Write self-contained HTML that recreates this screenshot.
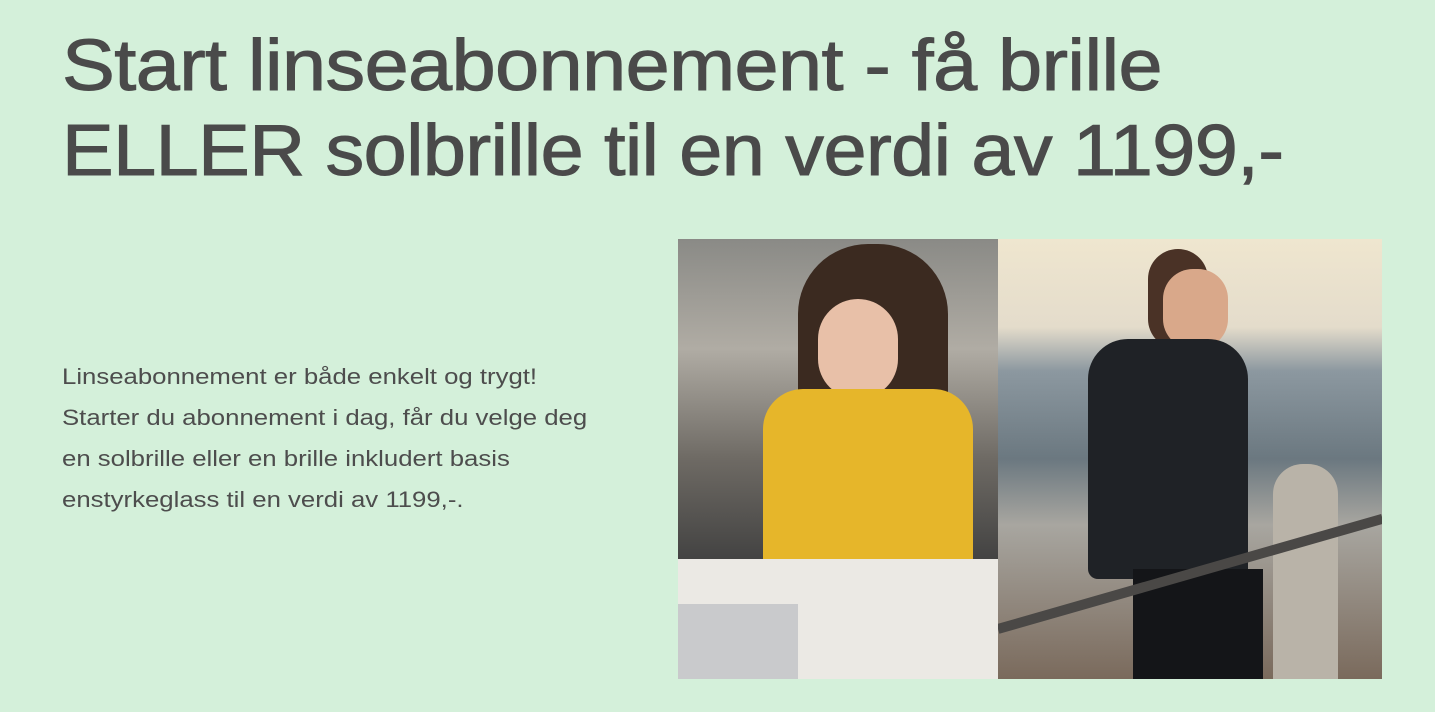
<!DOCTYPE html>
<html><head><meta charset="utf-8"><style>
body{margin:0;width:1435px;height:712px;background:#d4f0da;font-family:"Liberation Sans",sans-serif;color:#4a4a4a;overflow:hidden;position:relative}
.h{position:absolute;left:62px;font-size:72px;line-height:1;white-space:nowrap;transform-origin:left top;letter-spacing:-0.5px;-webkit-text-stroke:1px #4a4a4a}
.p{position:absolute;left:62px;font-size:22px;white-space:nowrap;transform:scaleX(1.17);transform-origin:left top;color:#4d4d4d}
.img{position:absolute;top:239px;height:440px;overflow:hidden}
</style></head><body>
<div class="h" style="top:30px;transform:scaleX(1.1)">Start linseabonnement - få brille</div>
<div class="h" style="top:115px;transform:scaleX(1.075)">ELLER solbrille til en verdi av 1199,-</div>
<div class="p" style="top:364px">Linseabonnement er både enkelt og trygt!</div>
<div class="p" style="top:405px">Starter du abonnement i dag, får du velge deg</div>
<div class="p" style="top:446px">en solbrille eller en brille inkludert basis</div>
<div class="p" style="top:487px">enstyrkeglass til en verdi av 1199,-.</div>
<div class="img" style="left:678px;width:320px;background:linear-gradient(180deg,#8a8a86 0%,#b0aca4 25%,#6e6a64 50%,#3f3f3f 75%,#d8d6d0 100%)">
<div style="position:absolute;left:120px;top:5px;width:150px;height:300px;background:#3b2a20;border-radius:70px 70px 20px 20px"></div>
<div style="position:absolute;left:140px;top:60px;width:80px;height:100px;background:#e8c0a8;border-radius:40px"></div>
<div style="position:absolute;left:85px;top:150px;width:210px;height:210px;background:#e6b62a;border-radius:40px 40px 10px 10px"></div>
<div style="position:absolute;left:0;top:320px;width:320px;height:120px;background:#ebe9e4"></div>
<div style="position:absolute;left:0;top:365px;width:120px;height:75px;background:#c9cacc"></div>
</div>
<div class="img" style="left:998px;width:384px;background:linear-gradient(180deg,#efe6cf 0%,#e4dccb 20%,#8c98a0 30%,#6b7880 50%,#a8a6a0 65%,#7a6a5c 100%)">
<div style="position:absolute;left:150px;top:10px;width:60px;height:100px;background:#4a3226;border-radius:30px"></div>
<div style="position:absolute;left:165px;top:30px;width:65px;height:80px;background:#d9a88a;border-radius:30px"></div>
<div style="position:absolute;left:90px;top:100px;width:160px;height:240px;background:#1f2226;border-radius:40px 40px 10px 10px"></div>
<div style="position:absolute;left:135px;top:330px;width:130px;height:110px;background:#141518"></div>
<div style="position:absolute;left:275px;top:225px;width:65px;height:215px;background:#b9b3a8;border-radius:30px 30px 0 0"></div>
<div style="position:absolute;left:0;top:385px;width:400px;height:10px;background:#4a4846;transform:rotate(-16deg);transform-origin:left"></div>
</div>
</body></html>
